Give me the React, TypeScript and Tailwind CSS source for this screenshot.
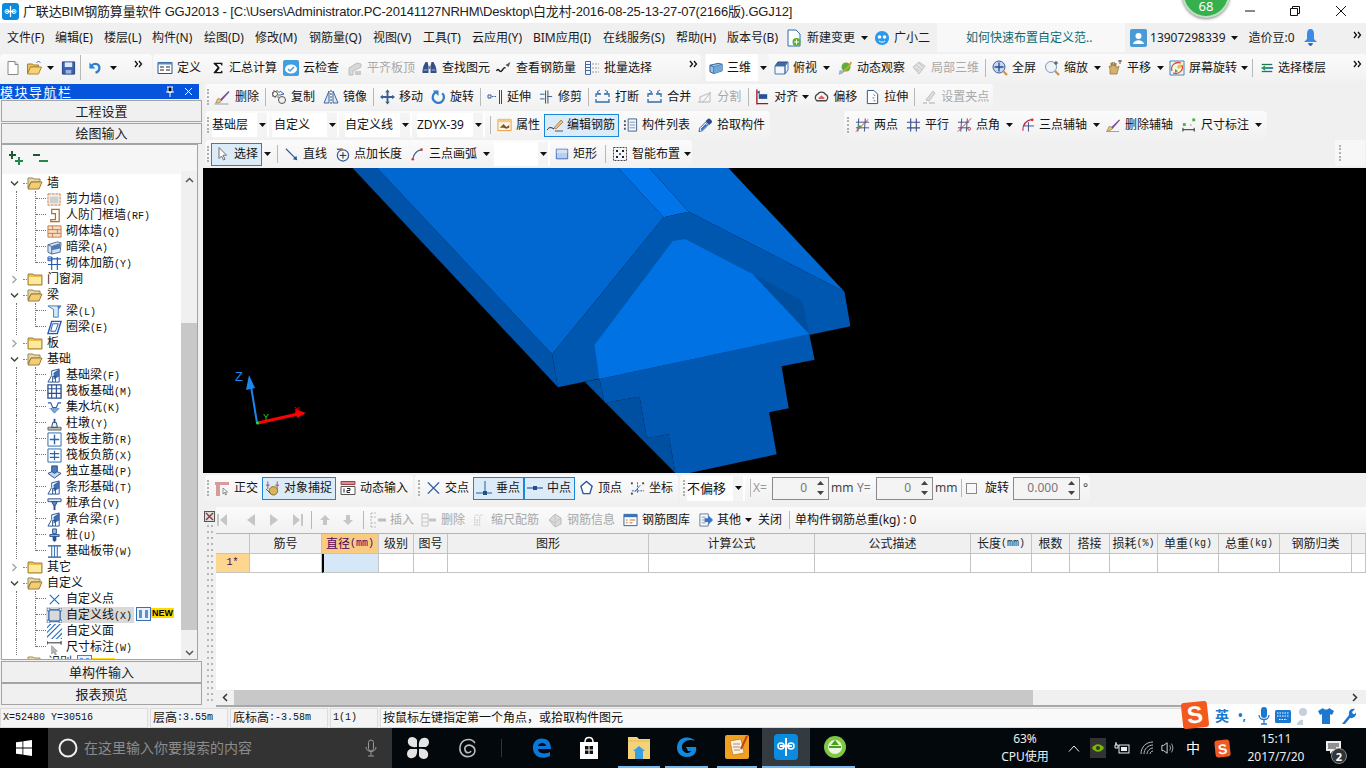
import React from 'react';

type N = React.ReactNode;
const Svg = ({ w = 16, h = 16, vb = '0 0 16 16', children }: { w?: number; h?: number; vb?: string; children: N }) => (
  <svg width={w} height={h} viewBox={vb} className="shrink-0 block" fill="none">{children}</svg>
);

const ic: Record<string, N> = {
  newf: <><path d="M3 1.500h7l3 3v10H3z" fill="#fff" stroke="#888" /><path d="M10 1.500v3h3" stroke="#888" fill="#e8e8e8" /></>,
  open: <><path d="M1 4h5l1 1h5v2H4L1 14z" fill="#e8c468" stroke="#a87f20" /><path d="M4 7h11l-3 7H1z" fill="#f6d27a" stroke="#b08a2a" /><path d="M10 3c1-2 3-2 4 0" stroke="#3a6fc0" /></>,
  save: <><path d="M1.500 1.500h13v13h-13z" fill="#3a62b4" stroke="#24407c" /><path d="M4 2h8v5H4z" fill="#dfe8f6" /><path d="M5 10h6v4H5z" fill="#9db4d8" /></>,
  undo: <><path d="M4 5c4-3 9-1 8 4-.4 2-2 3.500-4 4" stroke="#2f7fd0" strokeWidth="2.400" /><path d="M1.500 2v6.500H8z" fill="#2f7fd0" /></>,
  def: <><path d="M1 2.500h14v11H1z" fill="#fff" stroke="#27558f" /><path d="M1 2.500h14v2H1z" fill="#5d8bc4" /><path d="M3 7h4M3 10h4M9 7h4M9 10h4" stroke="#222" /></>,
  sigma: <path d="M3 2h10v3h-1l-1-1.500H6.500L10 8l-3.500 4.500H11l1-1.500h1v3H3v-1l4.500-5.500L3 3z" fill="#111" />,
  cloud: <><rect x="0" y="0" width="16" height="16" rx="2" fill="#3f9fe0" /><ellipse cx="8" cy="9" rx="6" ry="4.500" fill="#fff" /><path d="M5 9l2 2 4-4" stroke="#3f9fe0" strokeWidth="1.500" /></>,
  flat: <><path d="M2 8l8-5 4 1v3L6 11v4H2z" fill="#d8d8d8" stroke="#bdbdbd" /><path d="M8 11h6v4H8z" fill="#cacaca" /></>,
  binoc: <><path d="M2 6l2-4h2l1 4v7H1v-3zM14 6l-2-4h-2L9 6v7h6v-3z" fill="#354f86" /><path d="M7 6h2v3H7z" fill="#6b7fa8" /><path d="M2 10h4M10 10h4" stroke="#a9b8d4" /></>,
  view: <><path d="M1 11c2-4 3 2 5 0s2-4 4-3" stroke="#222" strokeWidth="1.500" /><path d="M10 5l5-3-2 5z" fill="#555" /></>,
  batch: <><path d="M1.500 1.500h5v13h-5z" stroke="#4668a4" /><path d="M1.500 4.500h5M1.500 7.500h5M1.500 10.500h5" stroke="#4668a4" /><path d="M8 4h7M8 8h7M8 12h7" stroke="#9a9a9a" strokeDasharray="2 1" /></>,
  cube: <><path d="M1 5l9-2 4 1v7l-9 3-4-2z" fill="#9cc4e6" stroke="#2c5f92" /><path d="M1 5l4 2 9-3M5 7v7" stroke="#2c5f92" /><path d="M5 7l9-3v7l-9 3z" fill="#6ea7d8" /></>,
  top: <><path d="M5 2h10l-3 4H2z" fill="#3e6da8" stroke="#2c4f80" /><path d="M2 6h10v8H2zM12 6l3-4v8l-3 4z" fill="#f0f6fc" stroke="#4c78aa" /></>,
  orbit: <><circle cx="9" cy="7" r="4.500" fill="#5fae3c" /><path d="M2 14C5 13 13 7 14 2" stroke="#c9a23a" strokeWidth="1.800" /><circle cx="4" cy="12" r="2" fill="#9ab6d8" /></>,
  local: <><path d="M2 7l6-5 6 4-6 8z" fill="#e2e2e2" stroke="#c4c4c4" /><path d="M5 5l6 5M8 3l4 4M3 8l5 3" stroke="#c4c4c4" /></>,
  full: <><circle cx="7" cy="7" r="6" fill="#c6d8f0" stroke="#3a5f9c" /><path d="M7 2.500v9M2.500 7h9" stroke="#244a8c" strokeWidth="1.300" /><path d="M11 11l4 4" stroke="#d89236" strokeWidth="2.200" /></>,
  zoom: <><circle cx="7" cy="7" r="5.500" fill="#eef3fa" stroke="#8097b8" /><path d="M11 11l4 4" stroke="#c09540" strokeWidth="2.200" /><path d="M12 1v4M10 3h4" stroke="#444" /></>,
  pan: <><path d="M3 14V9L2 6l2 1V3l1 3V2l2 4V2l1 4 1-3v5l3-2-2 8H3z" fill="#d8b070" stroke="#8e6b2e" strokeWidth=".7" /><path d="M11 1h4M13 0v4" stroke="#555" /></>,
  rot: <><path d="M1 1h14v14H1z" fill="#f3f7e8" stroke="#3e86c6" /><path d="M8 6l4-2 1 3-4 2z" fill="#e6c24a" /><path d="M6 9l3 2-3 2z" fill="#58a548" /><path d="M3 11C1 6 6 1 12 3M13 5c2 5-3 10-9 8" stroke="#e24a3a" strokeWidth="1.300" /></>,
  floor: <><path d="M2 4h12" stroke="#1f7a4c" strokeWidth="1.500" /><path d="M6 8h9" stroke="#2a6eb0" strokeWidth="2" /><path d="M2 12h12" stroke="#1f7a4c" strokeWidth="1.500" /><path d="M6 5v6L1 8z" fill="#1f9a58" /></>,
  brush: <><path d="M5 11L14 2l1 1-8 9z" fill="#7a4aa0" /><path d="M3 10c2-1 3 0 4 2-2 2-4 2-6 2 1-1 1-2 2-4z" fill="#e8c47a" stroke="#8a6a2a" strokeWidth=".6" /><path d="M0 15h14" stroke="#8aa0b8" /></>,
  copy: <><path d="M2 2h6v6H2z" fill="#fff" stroke="#666" strokeDasharray="2 1" /><circle cx="4" cy="5" r="2.500" stroke="#555" /><circle cx="11" cy="11" r="3.500" stroke="#555" fill="#f0f0f0" /><path d="M9 2l4 3-4 1" stroke="#3a66a8" /></>,
  mirror: <><path d="M1 14L6 2v12zM15 14L10 2v12z" fill="#dbe8f6" stroke="#3a66a8" /><path d="M8 1v14" stroke="#444" strokeDasharray="2 1" /></>,
  move: <path d="M8 0l2.500 3H9v4h4V5.500L16 8l-3 2.500V9H9v4h1.500L8 16l-2.500-3H7V9H3v1.500L0 8l3-2.500V7h4V3H5.500z" fill="#3b5e95" />,
  rotate: <><path d="M12 4a6 6 0 1 1-7-1" stroke="#2f7ec9" strokeWidth="2.400" /><path d="M2 1h6v6z" fill="#2f7ec9" /></>,
  extend: <><path d="M1 6h3v3H1z" stroke="#2f5f9e" /><path d="M5 7.500h5" stroke="#2f5f9e" strokeDasharray="1.500 1" /><path d="M12.500 1v14M14.500 1v14" stroke="#2a4f88" /></>,
  trim: <><path d="M1 5h5M1 10h5M9 7.500h5" stroke="#2f5f9e" /><path d="M7 1v14M9.500 1v14" stroke="#444" /></>,
  brk: <><path d="M1 8V5h5M9 5h5v3M1 10v3h13v-3" stroke="#2f6ea8" strokeWidth="1.300" /><path d="M5 1L2 3l3 2M10 1l3 2-3 2" stroke="#2f6ea8" /></>,
  merge: <><path d="M1 8V5h5M9 5h5v3M1 10v3h13v-3" stroke="#2f6ea8" strokeWidth="1.300" /><path d="M2 1l3 2-3 2M13 1l-3 2 3 2" stroke="#2f6ea8" /></>,
  split: <><path d="M1 13h12M3 13V8l10-4v9" stroke="#c8c8c8" strokeWidth="1.300" /><path d="M5 14L14 3" stroke="#bdbdbd" /></>,
  align: <><path d="M2 0v16M2 15h12" stroke="#a01818" strokeWidth="1.400" /><path d="M4 5h9v5H4z" fill="#284f98" /><path d="M2 3l3-2v4z" fill="#284f98" /></>,
  offset: <><path d="M3 12a4 4 0 0 1 1-7c1-3 7-3 8 0a4 4 0 0 1 1 7z" fill="#f4f4f4" stroke="#444" strokeWidth="1.400" /><path d="M5 10c-1-2 2-2 3-4 1 2 4 2 3 4z" fill="#e06060" /></>,
  stretch: <><path d="M2.500 1h7l4 4v10h-11z" fill="#fff" stroke="#224c88" /><path d="M9 5l2 2M8 9h2M9 12h2" stroke="#666" /></>,
  handle: <><path d="M2 14h4M8 14h6" stroke="#c4c4c4" strokeWidth="1.500" /><path d="M5 11l7-9 2 2-6 8z" fill="#dcdcdc" stroke="#c0c0c0" /></>,
  prop: <><path d="M1 2h14v12H1z" fill="#fff4e2" stroke="#e89a3c" /><path d="M1 2h14v3H1z" fill="#f6c884" /><path d="M3 11l4-4 3 3 3-2v3l-3 1-3-1z" fill="#6d5a34" /></>,
  edit: <><path d="M0 13c2-3 4-3 7-1" stroke="#222" /><path d="M7 11l7-8 2 2-7 7z" fill="#e8c088" stroke="#9a6b2c" strokeWidth=".7" /><path d="M8 14h8" stroke="#555" /></>,
  list: <><path d="M1 3h2v2H1zM1 7h2v2H1zM1 11h2v2H1z" fill="#556" /><path d="M5.500 1.500h9v13h-9z" fill="#f4f7fb" stroke="#3f5e8c" /><path d="M7 5h6M7 8h6M7 11h6" stroke="#7c90ae" /></>,
  pick: <><path d="M1 15l1-4 6-6 3 3-6 6z" fill="#fff" stroke="#2c5ca8" /><path d="M3 12l5-5 2 1-6 6z" fill="#2c6bc8" /><path d="M8 4l3-3c2 0 4 2 4 4l-3 3z" fill="#2a4c8c" /></>,
  two: <><path d="M4 1l-1 14M11 1l-1 14M1 5h14M1 11h14" stroke="#3a4f88" /><path d="M1 15L14 2" stroke="#d03030" /><circle cx="5" cy="10" r="1.700" fill="#57a030" /></>,
  para: <path d="M5 1v14M11 1v14M1 5h14M1 11h14" stroke="#3a4f88" strokeWidth="1.200" />,
  angle: <><path d="M5 1l-1 14M11 1l-1 14M1 5h12M1 11h12" stroke="#3a4f88" /><path d="M1 15L15 1" stroke="#d03030" /><circle cx="13" cy="12" r="1.500" stroke="#d03030" /></>,
  arc3: <><path d="M3 14C3 6 7 3 13 2" stroke="#c83040" strokeWidth="1.300" /><circle cx="13" cy="2.500" r="1.500" fill="#c83040" /><path d="M9 5v10M4 9h11" stroke="#3a4f88" /></>,
  dim: <><path d="M1 11v4M13 11v4M1 13h12" stroke="#222" /><rect x="1" y="6" width="3" height="3" fill="#48b048" /><rect x="11" y="1" width="3" height="3" fill="#48b048" /><path d="M9 8h1" stroke="#333" /></>,
  sel: <path d="M5 1.500v11l2.500-2.500 2 4 1.500-.8-2-4h3.500z" fill="#fff" stroke="#707070" />,
  line: <><path d="M1 2l11 11" stroke="#2a5a96" strokeWidth="1.300" /><path d="M14 15l-5-1 4-4z" fill="#2a5a96" /></>,
  lenp: <><circle cx="8.500" cy="9.500" r="6" stroke="#2f5c96" strokeWidth="1.300" /><path d="M8.500 6v7M5 9.500h7" stroke="#222" /><path d="M2 3h5" stroke="#2f5c96" strokeWidth="1.500" /><circle cx="7" cy="3" r="1.500" fill="#d26a2a" /></>,
  arc: <><path d="M2 14C3 8 7 4 12 3" stroke="#2f5c96" strokeWidth="1.400" /><circle cx="2" cy="14" r="1.500" fill="#d03a3a" /><circle cx="12" cy="3" r="1.500" fill="#d03a3a" /></>,
  rect: <><path d="M1.500 2.500h13v11h-13z" fill="#b8cef0" stroke="#3464b8" /><path d="M2 3h12v4H2z" fill="#d4e2f8" /></>,
  smart: <><path d="M1.500 1.500h13v13h-13z" fill="#f6f6f6" stroke="#444" strokeDasharray="2 1" /><path d="M4 4h2v2H4zM10 4h2v2h-2zM4 10h2v2H4zM10 10h2v2h-2z" fill="#222" /><path d="M7 7h2v2H7z" fill="#2f6ec8" /></>,
  ortho: <><path d="M1 2h14v3H6v11H2V5H1z" fill="#d89b9b" /><path d="M9 8l0 6 1.500-1.500 1 2.500 1-.5-1-2.500 2 0z" fill="#fff" stroke="#666" strokeWidth=".7" /></>,
  snap: <><path d="M3 1v8M13 1v8M1 5h4M11 5h4" stroke="#b84848" /><circle cx="9" cy="11" r="4.500" fill="#d8b45a" stroke="#8a6b26" /><path d="M1 9l5 5" stroke="#6a4a18" /></>,
  dyn: <><path d="M1 1.500h14v3H1z" fill="#d89090" stroke="#a04040" /><path d="M1 6.500h14v8H1z" fill="#fff" stroke="#555" /><path d="M4 8.500v4M7 8.500h3v2H7v2h3" stroke="#222" /></>,
  cross: <path d="M2 2l12 12M14 2L2 14" stroke="#2a5a9c" strokeWidth="1.500" />,
  perp: <><path d="M0 13h16" stroke="#2a5a9c" /><path d="M9 1v12" stroke="#2a5a9c" /><rect x="7" y="11" width="4" height="4" fill="#20508c" /></>,
  mid: <><path d="M0 8h16" stroke="#2a5a9c" strokeWidth="1.200" /><rect x="6" y="6" width="4" height="4" fill="#20508c" /></>,
  vert: <path d="M8 1l6 5-2.500 8h-7L2 6z" fill="#fff" stroke="#2a5a9c" strokeWidth="1.500" />,
  coord: <><path d="M8 2v12M2 11h13" stroke="#2a5a9c" strokeDasharray="2 1" /><rect x="1" y="2" width="2" height="2" fill="#444" /><rect x="13" y="2" width="2" height="2" fill="#444" /><rect x="1" y="13" width="2" height="2" fill="#444" /><path d="M5 12l6-7" stroke="#2a7ac9" /></>,
  ins: <><path d="M2 1h5M2 1v14M2 15h5M2 5h5M2 11h5" stroke="#bdbdbd" strokeDasharray="2 1" /><path d="M9 8h8" stroke="#bdbdbd" strokeWidth="3" /></>,
  del: <><path d="M1 2h6v12H1zM1 6h6M1 10h6" stroke="#c4c4c4" /><path d="M8 8h7" stroke="#c4c4c4" strokeWidth="3" /></>,
  scale: <><path d="M1 15V4M4 15V7M7 15V4" stroke="#c0c0c0" strokeWidth="1.200" strokeDasharray="2 1" /><path d="M1 2h10" stroke="#c0c0c0" strokeDasharray="2 1" /></>,
  info: <><path d="M2 8l6-6 6 4v6l-6 3z" fill="#dadada" stroke="#bcbcbc" /><path d="M8 2v13M2 8l6 3 6-5" stroke="#c4c4c4" /></>,
  lib: <><path d="M1 2h14v12H1z" fill="#fff" stroke="#2d5f98" /><path d="M1 2h14v3H1z" fill="#3a74b8" /><path d="M3 8h2M7 8h6M3 11h2M7 11h3" stroke="#c86030" /></>,
  other: <><path d="M2 1.500h9v13H2z" fill="#f4f6fa" stroke="#6b7d98" /><path d="M4 5h4M4 8h3M4 11h4" stroke="#8a98b0" /><path d="M7 6h4V3l5 5-5 5v-3H7z" fill="#3a74c8" /></>,
};

const I = ({ n, w = 16 }: { n: string; w?: number }) => <Svg w={w}>{ic[n]}</Svg>;

const Arr = ({ c = '#111' }: { c?: string }) => (
  <svg width="7" height="4" viewBox="0 0 7 4" className="shrink-0 block"><path d="M0 0h7L3.500 4z" fill={c} /></svg>
);
const Drop = ({ n, cls = '' }: { n?: boolean; cls?: string }) => (
  <div className={`flex items-center justify-center shrink-0 h-full ${n ? 'w-[6px]' : 'w-[10px]'} ${cls}`}><Arr /></div>
);
const Sep = ({ cls = '' }: { cls?: string }) => (
  <div className={`w-[5px] shrink-0 h-full flex items-center justify-center ${cls}`}><div className="w-px h-[18px] bg-[#b8b8b8]" /></div>
);
const Grip = ({ cls = 'w-[5px]' }: { cls?: string }) => (
  <div className={`shrink-0 flex justify-center ${cls}`}><div className="h-[16px] border-l-2 border-dotted border-[#b0b0b0]" /></div>
);
const Tool = ({ i, t, g, w = 16, cls = '' }: { i: string; t: string; g?: boolean; w?: number; cls?: string }) => (
  <div className={`flex items-center gap-1 px-1 h-full shrink-0 ${g ? 'text-[#a8a8a8]' : 'text-[#141414]'} ${cls}`}>
    <I n={i} w={w} />
    <span className="whitespace-nowrap">{t}</span>
  </div>
);
const Act = ({ i, t, w = 16 }: { i: string; t: string; w?: number }) => (
  <div className="flex items-center gap-1 pl-[2px] pr-[3px] shrink-0 h-[23px] border border-[#1a86d8] bg-[#dcebf8] text-[#141414]">
    <I n={i} w={w} />
    <span className="whitespace-nowrap">{t}</span>
  </div>
);
const More = ({ cls = '' }: { cls?: string }) => (
  <svg width="10" height="8" viewBox="0 0 10 8" className={`shrink-0 block ${cls}`}><path d="M1 1l2.500 3L1 7M5 1l2.500 3L5 7" stroke="#111" strokeWidth="1.300" fill="none" /></svg>
);
const Sel = ({ t, cls, txt = '' }: { t?: string; cls: string; txt?: string }) => (
  <div className={`flex items-center justify-between h-[24px] shrink-0 bg-white pr-[2px] ${cls}`}>
    <span className={`whitespace-nowrap ${txt}`}>{t}</span>
    <div className="w-[10px] h-full flex items-center justify-center bg-[#f4f4f4]"><Arr /></div>
  </div>
);
const Seg = ({ cls = '', children }: { cls?: string; children: N }) => (
  <div className={`flex items-center shrink-0 rounded-sm bg-gradient-to-b from-[#fbfbfb] to-[#f1f1f1] ${cls}`}>{children}</div>
);

const M = ({ s }: { s: string }) => (
  <>
    {s.split(/([\x20-\x7e]+)/).map((p, i) =>
      /^[\x20-\x7e]+$/.test(p)
        ? <span key={i} className="font-['Liberation_Mono',monospace] text-[10px] whitespace-pre">{p}</span>
        : <span key={i}>{p}</span>
    )}
  </>
);

const Win = ({ children, cls = '' }: { children: N; cls?: string }) => (
  <div className={`h-[22px] mx-px border border-[#a4a4a4] bg-[#f0f0f0] flex items-center justify-center text-[13px] text-[#222] shrink-0 ${cls}`}>{children}</div>
);

const treeIcons: Record<string, N> = {
  shear: <><path d="M1 2h13v12H1z" fill="#eee" stroke="#d0773a" strokeDasharray="3 1" /><path d="M3 5h9v7H3z" fill="#bbb" opacity=".6" /></>,
  door: <path d="M5 1.500h8v13H4v-2h5V6H5z" fill="#fff" stroke="#b86a26" strokeWidth="1.300" />,
  brick: <><path d="M1 2h14v12H1z" fill="#f6dcc4" stroke="#c87a44" /><path d="M1 6h14M1 10h14M6 2v4M11 6v4M6 10v4" stroke="#c87a44" /></>,
  dark: <><path d="M1 5l10-3 4 1-1 10-9 2-4-2z" fill="#d6e2f0" stroke="#486c98" /><path d="M5 7v8M1 5l4 2 9-3" stroke="#486c98" /><path d="M5 7l9-3v5l-9 2z" fill="#4f7cb0" /></>,
  wr: <><path d="M1 3h14M1 9h14M5 1v14M11 1v14" stroke="#2458b0" strokeWidth="1.200" /><path d="M1 1h4v4H1z" fill="none" stroke="#2458b0" /></>,
  beam: <><path d="M1 2h14l-3 4v8H7V6z" fill="#dbe8f6" stroke="#3c7cc0" /><path d="M11 2l3 0-2 4z" fill="#3c7cc0" /></>,
  ring: <><path d="M5 1.500h10l-4 13H1z" fill="#eef4fc" stroke="#2458b0" strokeWidth="1.500" /><path d="M6 4h6l-3 8H4z" fill="#fff" stroke="#2458b0" /></>,
  fb: <><path d="M1 15l4-7V3l8-2v14H1z" fill="#fff" stroke="#284f90" /><path d="M7 5l6-4v8l-6 3z" fill="#3b6db0" /><path d="M6 15V9h3v6" stroke="#284f90" /></>,
  raft: <><path d="M1 1h14v14H1z" fill="#fff" stroke="#284f90" strokeWidth="1.400" /><path d="M5 1v14M10 1v14M1 5h14M1 10h14" stroke="#284f90" strokeWidth="1.200" /></>,
  pit: <><path d="M1 3h3l2 5h4l2-5h3" stroke="#2a5ea8" strokeWidth="1.200" /><path d="M3 9l5 5 5-5z" fill="#7aa6d8" strokeDasharray="1 1" stroke="#2a5ea8" /></>,
  pier: <><path d="M1 12h14v3H1z" fill="#b8b8b8" stroke="#666" /><path d="M5 12l1-5h4l1 5z" fill="#eef" stroke="#245" /><path d="M7 7V3h2v4z" fill="#2458b0" /></>,
  main: <><path d="M1 1h14v14H1z" fill="#fff" stroke="#2a64b0" /><path d="M8 3v10M3 8h10" stroke="#2a64b0" strokeWidth="1.500" /></>,
  neg: <><path d="M1 1h14v14H1z" fill="#fff" stroke="#2a64b0" /><path d="M8 3v10M3 6h10M3 10h10" stroke="#2a64b0" strokeWidth="1.300" /></>,
  ind: <><path d="M1 10l7-3 7 3-7 5z" fill="#c8d8ec" stroke="#284f90" /><path d="M5 8V2h6v6l-3 2z" fill="#4a7ab8" stroke="#284f90" /></>,
  pc: <><path d="M1 3h14v3H1z" fill="#dce8f6" stroke="#284f90" /><path d="M5 6h6l-2 4H7z" fill="#5a8ac0" stroke="#284f90" /><path d="M7 10h2v5H7z" fill="#284f90" /></>,
  pile: <><path d="M6 1h4v5H6zM3 7h10v2H3z" fill="#9bbbe0" stroke="#284f90" /><path d="M6 9h4v4l-2 2-2-2z" fill="#284f90" /></>,
  band: <><path d="M1 2h14M1 14h14" stroke="#284f90" strokeWidth="1.500" /><path d="M5 2v12M11 2v12M8 2v12" stroke="#3d78c0" strokeWidth="1.200" /></>,
  cp: <path d="M3 3l10 10M13 3L3 13" stroke="#2a6ec0" strokeWidth="1.300" />,
  cl: <><path d="M2 2h12v12H2z" stroke="#1f58a8" strokeWidth="1.200" /><path d="M0 0h3v3H0zM13 0h3v3h-3zM0 13h3v3H0zM13 13h3v3h-3z" fill="#fff" stroke="#1f58a8" strokeWidth=".8" /></>,
  cf: <path d="M-1 5L5 -1M-1 10L10 -1M-1 15L15 -1M4 17L17 4M9 17L17 9M14 17L17 14" stroke="#2a6ec0" strokeWidth="1.200" />,
  dm: <><path d="M0 1v4M15 1v4M0 3h15" stroke="#222" /><path d="M5 6v9l2-2 2 3 1-1-2-3h3z" fill="#bbb" stroke="#888" strokeWidth=".7" /></>,
};

type R = { l: 0 | 1; t: string; i?: string; open?: boolean; last?: boolean; sel?: boolean };
const tree: R[] = [
  { l: 0, t: '墙', open: true },
  { l: 1, t: '剪力墙(Q)', i: 'shear' }, { l: 1, t: '人防门框墙(RF)', i: 'door' }, { l: 1, t: '砌体墙(Q)', i: 'brick' }, { l: 1, t: '暗梁(A)', i: 'dark' }, { l: 1, t: '砌体加筋(Y)', i: 'wr', last: true },
  { l: 0, t: '门窗洞' },
  { l: 0, t: '梁', open: true },
  { l: 1, t: '梁(L)', i: 'beam' }, { l: 1, t: '圈梁(E)', i: 'ring', last: true },
  { l: 0, t: '板' },
  { l: 0, t: '基础', open: true },
  { l: 1, t: '基础梁(F)', i: 'fb' }, { l: 1, t: '筏板基础(M)', i: 'raft' }, { l: 1, t: '集水坑(K)', i: 'pit' }, { l: 1, t: '柱墩(Y)', i: 'pier' }, { l: 1, t: '筏板主筋(R)', i: 'main' }, { l: 1, t: '筏板负筋(X)', i: 'neg' }, { l: 1, t: '独立基础(P)', i: 'ind' }, { l: 1, t: '条形基础(T)', i: 'fb' }, { l: 1, t: '桩承台(V)', i: 'pc' }, { l: 1, t: '承台梁(F)', i: 'fb' }, { l: 1, t: '桩(U)', i: 'pile' }, { l: 1, t: '基础板带(W)', i: 'band', last: true },
  { l: 0, t: '其它' },
  { l: 0, t: '自定义', open: true },
  { l: 1, t: '自定义点', i: 'cp' }, { l: 1, t: '自定义线(X)', i: 'cl', sel: true }, { l: 1, t: '自定义面', i: 'cf' }, { l: 1, t: '尺寸标注(W)', i: 'dm', last: true },
];

const Folder = ({ open }: { open?: boolean }) => (
  <svg width="16" height="14" viewBox="0 0 16 14" className="shrink-0 block">
    {open ? <><path d="M1 2h5l1 1h6v3H4L1 12z" fill="#e8d8a8" stroke="#9a8450" /><path d="M4 6h11l-3 7H1z" fill="#f4cd72" stroke="#9a7c3c" /></>
      : <><path d="M1 2h5l1 1h8v10H1z" fill="#f0c040" stroke="#9a8450" /><path d="M2 5h12v7H2z" fill="#ffe8a0" /></>}
  </svg>
);
const NewMark = () => (
  <span className="bg-[#ffd800] text-black text-[9px] leading-[9px] font-bold font-['Liberation_Sans',sans-serif] px-px">NEW</span>
);
const Columns = () => (
  <svg width="15" height="14" viewBox="0 0 15 14" className="shrink-0 block"><rect x=".5" y=".5" width="14" height="13" fill="#eaf2fb" stroke="#3a70b8" /><path d="M3 3h3v8H3zM9 3h3v8H9z" fill="#5a90d0" /></svg>
);

const TreeRow = ({ r }: { r: R }) => {
  if (r.l === 0) {
    return (
      <div className="flex items-center h-4 shrink-0">
        <div className="w-[22px] flex justify-center shrink-0 pl-[5px]">
          <svg width="9" height="9" viewBox="0 0 9 9" className="block">
            {r.open ? <path d="M1 2.500l3.500 3.500L8 2.500" stroke="#444" strokeWidth="1.500" fill="none" /> : <path d="M2.500 1L6 4.500 2.500 8" stroke="#a8a8a8" strokeWidth="1.500" fill="none" />}
          </svg>
        </div>
        <div className="w-[4px] border-b border-dotted border-[#888] shrink-0" />
        <Folder open={r.open} />
        <span className="ml-[4px] whitespace-nowrap">{r.t}</span>
      </div>
    );
  }
  return (
    <div className="flex items-center h-4 shrink-0">
      <div className="w-[15px] shrink-0" />
      <div className="w-[19px] h-full border-l border-dotted border-[#777] shrink-0" />
      <div className={`w-[11px] shrink-0 self-start border-l border-dotted border-[#777] ${r.last ? 'h-[8px]' : 'h-full'} flex flex-col`}>
        <div className="h-[8px] border-b border-dotted border-[#777]" />
      </div>
      <div className={`flex items-center h-full ${r.sel ? 'bg-[#d9d9d9] pr-[2px]' : ''}`}>
        <div className="w-[16px] pl-px shrink-0"><Svg w={15} h={15}>{treeIcons[r.i!]}</Svg></div>
        <span className="ml-[4px] whitespace-nowrap"><M s={r.t} /></span>
      </div>
      {r.sel && <div className="ml-[2px] flex items-start h-full"><Columns /><div className="mt-[-1px]"><NewMark /></div></div>}
    </div>
  );
};

const Nav = () => (
  <div className="w-[203px] shrink-0 h-full flex flex-col">
    <div className="h-[15px] w-[199px] bg-[#0654dc] flex items-center text-white text-[13px] tracking-[1.5px] leading-none shrink-0">
      <span className="font-['Noto_Sans_CJK_SC',sans-serif]">模块导航栏</span>
      <svg width="10" height="11" viewBox="0 0 10 11" className="ml-auto block"><path d="M2 1h6M3 1v5h4V1M1 6h8M5 6v5" stroke="#fff" /></svg>
      <svg width="9" height="9" viewBox="0 0 9 9" className="ml-[9px] mr-[6px] block"><path d="M1 1l7 7M8 1L1 8" stroke="#fff" /></svg>
    </div>
    <Win cls="mt-[1px]">工程设置</Win>
    <Win cls="mt-[1px] !h-[21px]">绘图输入</Win>
    <div className="w-[197px] ml-px h-[516px] border border-[#a4a4a4] bg-white flex flex-col shrink-0 text-[#111]">
      <div className="h-[29px] bg-[#f6f6f6] flex items-start pt-[5px] pl-[6px] gap-[7px] shrink-0">
        <svg width="17" height="16" viewBox="0 0 17 16" className="block"><path d="M4 1v8M1 5h7" stroke="#1c5c2c" strokeWidth="2" /><path d="M11 7v8M7 11h8" stroke="#1f8a4a" strokeWidth="2" /></svg>
        <svg width="17" height="16" viewBox="0 0 17 16" className="block"><path d="M1 5h7" stroke="#1c5c2c" strokeWidth="2" /><path d="M7 11h9" stroke="#1f8a4a" strokeWidth="2" /></svg>
      </div>
      <div className="flex flex-1 min-h-0">
        <div className="flex-1 min-w-0 overflow-hidden flex flex-col pt-[1px] -ml-px">
          {tree.map((r) => <TreeRow key={r.t} r={r} />)}
          <div className="flex items-center h-4 shrink-0 -mt-[1px] opacity-90">
            <div className="w-[26px] shrink-0" />
            <Folder open />
            <span className="ml-[5px] whitespace-nowrap mr-[5px]">识别</span>
            <Columns />
            <NewMark />
          </div>
        </div>
        <div className="w-[16px] shrink-0 -mt-[3px] bg-[#f0f0f0] flex flex-col">
          <div className="h-[18px] flex items-center justify-center"><svg width="9" height="6" viewBox="0 0 9 6" className="block"><path d="M1 5l3.500-3.500L8 5" stroke="#555" strokeWidth="1.500" fill="none" /></svg></div>
          <div className="h-[134px]" />
          <div className="h-[307px] bg-[#c8c8c8]" />
          <div className="flex-1 flex items-end justify-center pb-[3px]"><svg width="9" height="6" viewBox="0 0 9 6" className="block"><path d="M1 1l3.500 3.500L8 1" stroke="#555" strokeWidth="1.500" fill="none" /></svg></div>
        </div>
      </div>
    </div>
    <Win cls="mt-[1px]">单构件输入</Win>
    <Win cls="mt-[0px]">报表预览</Win>
  </div>
);

const Scene = () => (
  <svg width="1163" height="305" className="block">
    <g transform="scale(0.44643 0.33333) translate(0 -9)">
      <path d="M335 9H390L782 568 795 667z" fill="#0053a8" />
      <path d="M390 9H930L1032 157 782 568z" fill="#0068d0" />
      <path d="M930 9H1000L1088 140 1032 157z" fill="#0074e8" />
      <path d="M1000 9H1177L1437 380 1088 140z" fill="#0068d0" />
      <path d="M782 568L1032 157 1088 140 1437 380 1450 484 795 667z" fill="#0057b0" />
      <path d="M855 650L888 642 900 713 978 695 994 820 1043 808 1058 924z" fill="#0050a2" />
      <path d="M888 642L1358 507 1370 584 1296 604 1312 730 1268 742 1285 868 1090 924H1058L1043 808 994 820 978 695 900 713z" fill="#0058b2" />
      <path d="M877 540L1052 228 1080 222 1232 328 1358 507 888 642z" fill="#0072e4" />
      <path d="M1232 328L1342 406 1358 507z" fill="#004f9e" />
    </g>
    <path d="M54 255L47 212" stroke="#1a88f0" strokeWidth="2" />
    <path d="M46 207L43 222 52 220z" fill="#1a88f0" />
    <path d="M55 255L95 246" stroke="#ff0000" strokeWidth="3" />
    <path d="M103 245L92 241 94 250z" fill="#ff0000" />
    <circle cx="54.500" cy="255" r="1.500" fill="#20e020" />
    <text x="32" y="213" fontSize="13" fill="#1a88f0" fontFamily="Liberation Sans">Z</text>
    <text x="60" y="252" fontSize="9" fill="#20d020" fontFamily="Liberation Sans">Y</text>
    <text x="91" y="245" fontSize="9" fill="#e00000" fontFamily="Liberation Sans">X</text>
  </svg>
);

const Spin = ({ v, cls }: { v: string; cls: string }) => (
  <div className={`h-[23px] border border-[#8a8a8a] bg-[#f4f4f4] flex items-center justify-end shrink-0 text-[#777] ${cls}`}>
    <span>{v}</span>
    <div className="w-[16px] flex flex-col items-center gap-[6px] ml-[5px]">
      <svg width="7" height="4" viewBox="0 0 7 4" className="block"><path d="M0 4h7L3.500 0z" fill="#444" /></svg>
      <svg width="7" height="4" viewBox="0 0 7 4" className="block"><path d="M0 0h7L3.500 4z" fill="#444" /></svg>
    </div>
  </div>
);

const Pg = ({ d, cls = '' }: { d: string; cls?: string }) => (
  <div className={`shrink-0 ${cls}`}><Svg w={12} h={14} vb="0 0 12 14"><path d={d} fill="#c6c6c6" /></Svg></div>
);

const cols = [
  ['', 'w-[34px]'], ['筋号', 'w-[72px]'], ['直径(mm)', 'w-[57px]'], ['级别', 'w-[35px]'], ['图号', 'w-[34px]'], ['图形', 'w-[201px]'],
  ['计算公式', 'w-[166px]'], ['公式描述', 'w-[156px]'], ['长度(mm)', 'w-[61px]'], ['根数', 'w-[38px]'], ['搭接', 'w-[40px]'], ['损耗(%)', 'w-[48px]'],
  ['单重(kg)', 'w-[61px]'], ['总重(kg)', 'w-[61px]'], ['钢筋归类', 'w-[72px]'], ['', 'flex-1'],
];

const Grid = () => (
  <div className="flex-1 min-h-0 bg-white flex flex-col border-t border-[#b4b4b4]">
    <div className="flex h-[20px] shrink-0">
      {cols.map(([t, w], i) => (
        <div key={i} className={`${w} shrink-0 h-full pt-px border-r border-b border-[#c4c4c4] flex items-center justify-center whitespace-nowrap ${i === 2 ? 'bg-[#f8cc80] text-[#50005a]' : 'bg-[#f0f0f0] text-[#222]'}`}><M s={t} /></div>
      ))}
    </div>
    <div className="flex h-[19px] shrink-0">
      {cols.map(([, w], i) => (
        <div key={i} className={`${w} shrink-0 h-full border-r border-b border-[#c4c4c4] flex items-center justify-center ${i === 0 ? 'bg-[#fdd78f] text-[#50005a]' : i === 2 ? 'bg-[#d6e7f7] border-l-2 border-l-black' : 'bg-white'}`}>{i === 0 ? <M s="1*" /> : null}</div>
      ))}
    </div>
  </div>
);

const Bottom = () => (
  <div className="flex flex-1 min-h-0">
    <div className="w-[13px] shrink-0 flex flex-col items-center pt-[4px]">
      <svg width="11" height="11" viewBox="0 0 11 11" className="block shrink-0"><rect x=".5" y=".5" width="10" height="10" fill="#ddd" stroke="#555" /><path d="M2 2l7 7M9 2L2 9" stroke="#803838" strokeWidth="1.300" /></svg>
      <div className="w-[8px] flex-1 mt-[1px] mb-[2px] bg-[radial-gradient(circle,#b8b8b8_1px,transparent_1.2px)] bg-[length:4px_6px]" />
    </div>
    <div className="flex-1 min-w-0 flex flex-col">
      <div className="h-[26px] shrink-0 flex items-center bg-gradient-to-b from-[#fbfbfb] to-[#f1f1f1]">
        <Pg d="M1 1h2v12H1zM11 1v12L4 7z" />
        <Pg cls="ml-[17px]" d="M10 1v12L2 7z" />
        <Pg cls="ml-[11px]" d="M2 1v12l8-6z" />
        <Pg cls="ml-[12px]" d="M1 1v12l7-6zM9 1h2v12H9z" />
        <Sep cls="ml-[5px]" />
        <Pg cls="ml-[5px]" d="M6 2l5 5H8v5H4V7H1z" />
        <Pg cls="ml-[11px]" d="M6 12L1 7h3V2h4v5h3z" />
        <Sep cls="ml-[7px]" />
        <Tool i="ins" t="插入" g w={18} cls="-ml-[2px]" />
        <Tool i="del" t="删除" g cls="-ml-[1px]" />
        <Tool i="scale" t="缩尺配筋" g w={13} cls="ml-[1px]" />
        <Tool i="info" t="钢筋信息" g />
        <Tool i="lib" t="钢筋图库" w={15} />
        <Tool i="other" t="其他" w={15} />
        <Drop n />
        <span className="ml-[7px] text-[#141414]">关闭</span>
        <Sep cls="ml-[5px]" />
        <span className="ml-[3px] text-[#141414] whitespace-nowrap">单构件钢筋总重(kg) : 0</span>
      </div>
      <Grid />
      <div className="h-[15px] shrink-0 bg-[#f0f0f0] flex items-center">
        <div className="w-[18px] flex justify-center shrink-0"><svg width="6" height="9" viewBox="0 0 6 9" className="block"><path d="M5 1L1.500 4.500 5 8" stroke="#333" strokeWidth="1.500" fill="none" /></svg></div>
        <div className="w-[799px] h-full bg-[#c8c8c8] shrink-0" />
        <div className="ml-auto w-[22px] flex justify-center"><svg width="6" height="9" viewBox="0 0 6 9" className="block"><path d="M1 1l3.500 3.500L1 8" stroke="#333" strokeWidth="1.500" fill="none" /></svg></div>
      </div>
      <div className="h-[2px] shrink-0 bg-[#a8a8a8]" />
    </div>
  </div>
);

const Right = () => (
  <div className="flex-1 min-w-0 h-full flex flex-col">
    <div className="h-[27px] shrink-0 flex items-start pl-[2px]">
      <Seg cls="h-[25px] w-[788px]">
        <Grip />
        <Tool i="brush" t="删除" w={17} /><Sep />
        <Tool i="copy" t="复制" cls="-ml-px" />
        <Tool i="mirror" t="镜像" /><Sep />
        <Tool i="move" t="移动" w={15} />
        <Tool i="rotate" t="旋转" w={15} /><Sep />
        <Tool i="extend" t="延伸" />
        <Tool i="trim" t="修剪" w={15} /><Sep />
        <Tool i="brk" t="打断" />
        <Tool i="merge" t="合并" />
        <Tool i="split" t="分割" g cls="-ml-[2px]" /><Sep cls="ml-px" />
        <Tool i="align" t="对齐" w={15} /><Drop n />
        <Tool i="offset" t="偏移" w={15} cls="ml-[2px]" />
        <Tool i="stretch" t="拉伸" w={15} /><Sep />
        <Tool i="handle" t="设置夹点" g />
      </Seg>
    </div>
    <div className="h-[29px] shrink-0 flex items-start pl-[2px]">
      <Seg cls="h-[28px] w-[565px]">
        <Grip />
        <Sel t="基础层" cls="w-[57px] ml-[2px]" />
        <Sel t="自定义" cls="w-[67px] ml-[3px] pl-[2px]" />
        <Sel t="自定义线" cls="w-[67px] ml-[6px]" />
        <Sel t="ZDYX-39" cls="w-[68px] ml-[5px]" />
        <Sep cls="ml-[3px]" />
        <Tool i="prop" t="属性" w={15} />
        <Act i="edit" t="编辑钢筋" />
        <Tool i="list" t="构件列表" w={15} />
        <Tool i="pick" t="拾取构件" w={15} />
      </Seg>
      <Seg cls="h-[28px] w-[423px] ml-[74px]">
        <Grip cls="w-[7px]" />
        <Tool i="two" t="两点" w={15} />
        <Tool i="para" t="平行" w={15} />
        <Tool i="angle" t="点角" w={15} /><Drop />
        <Tool i="arc3" t="三点辅轴" w={15} cls="ml-[2px]" /><Drop />
        <Tool i="brush" t="删除辅轴" w={15} cls="ml-px" />
        <Tool i="dim" t="尺寸标注" w={15} cls="ml-px" /><Drop />
      </Seg>
    </div>
    <div className="h-[28px] shrink-0 flex items-start pl-[2px]">
      <Seg cls="h-[28px] w-[487px]">
        <Grip />
        <div className="ml-px"><Act i="sel" t="选择" /></div>
        <Drop />
        <Sep cls="ml-[3px]" />
        <Tool i="line" t="直线" w={14} cls="ml-px" />
        <Tool i="lenp" t="点加长度" w={15} />
        <Tool i="arc" t="三点画弧" w={14} cls="ml-px" /><Drop />
        <Sel cls="w-[56px] ml-[3px]" />
        <Tool i="rect" t="矩形" w={14} cls="ml-px" />
        <Sep cls="ml-[2px]" />
        <Tool i="smart" t="智能布置" /><Drop n />
      </Seg>
      <div className="ml-auto mr-px w-[30px] h-[26px] bg-[#f7f7f7] flex items-center pl-[4px]">
        <div className="h-[16px] border-l-2 border-dotted border-[#b0b0b0]" />
      </div>
    </div>
    <div className="h-[305px] shrink-0 bg-black overflow-hidden"><Scene /></div>
    <div className="h-[30px] shrink-0 flex items-center pl-[2px] gap-[2px]">
      <Seg cls="h-[27px] w-[208px]">
        <Grip />
        <Tool i="ortho" t="正交" />
        <Act i="snap" t="对象捕捉" w={15} />
        <Tool i="dyn" t="动态输入" />
      </Seg>
      <Seg cls="h-[27px] w-[263px]">
        <Grip cls="w-[7px]" />
        <Tool i="cross" t="交点" w={15} />
        <Act i="perp" t="垂点" />
        <Act i="mid" t="中点" />
        <Tool i="vert" t="顶点" w={15} />
        <Tool i="coord" t="坐标" w={15} />
      </Seg>
      <Seg cls="h-[27px] w-[410px]">
        <Grip cls="w-[7px]" />
        <Sel t="不偏移" cls="w-[58px] !h-[25px] text-[13px]" />
        <Sep cls="ml-[3px]" />
        <span className="text-[#9a9a9a] w-[19px] shrink-0">X=</span>
        <Spin v="0" cls="w-[57px]" />
        <span className="ml-[2px] text-[#444] w-[26px] shrink-0">mm</span>
        <span className="text-[#777] w-[19px] shrink-0">Y=</span>
        <Spin v="0" cls="w-[57px]" />
        <span className="ml-[2px] text-[#444] w-[24px] shrink-0">mm</span>
        <Sep />
        <div className="ml-[2px] w-[11px] h-[11px] border border-[#8a8a8a] bg-[#f8f8f8] shrink-0" />
        <span className="ml-[8px] text-[#141414] shrink-0">旋转</span>
        <Spin v="0.000" cls="w-[67px] ml-[4px]" />
        <span className="ml-[3px] text-[#444]">°</span>
      </Seg>
    </div>
    <div className="h-[4px] shrink-0" />
    <Bottom />
  </div>
);

const Cell = ({ t, cls }: { t: string; cls: string }) => (
  <div className={`h-[20px] border border-[#dcdcdc] flex items-center shrink-0 pl-[2px] whitespace-nowrap text-[#111] ${cls}`}><M s={t} /></div>
);

const Tb = ({ children, cls = '' }: { children: N; cls?: string }) => (
  <div className={`h-full shrink-0 flex items-center justify-center ${cls}`}>{children}</div>
);

const Taskbar = () => (
  <div className="h-[40px] shrink-0 bg-[#03080c] flex items-stretch text-white">
    <Tb cls="w-[48px] bg-black">
      <svg width="16" height="16" viewBox="0 0 16 16" className="block"><path d="M0 2.300l6.500-.9v6.200H0zM7.300 1.300L16 0v7.600H7.300zM0 8.400h6.500v6.200L0 13.700zM7.300 8.400H16V16l-8.700-1.200z" fill="#fff" /></svg>
    </Tb>
    <div className="w-[344px] bg-[#333] flex items-center pl-[10px] shrink-0">
      <svg width="20" height="20" viewBox="0 0 20 20" className="block shrink-0"><circle cx="10" cy="10" r="8.500" stroke="#eee" strokeWidth="2" fill="none" /></svg>
      <span className="ml-[6px] text-[14px] text-[#8c8c8c] whitespace-nowrap">在这里输入你要搜索的内容</span>
      <svg width="12" height="18" viewBox="0 0 12 18" className="block ml-auto mr-[15px]"><rect x="3.500" y="1" width="5" height="11" rx="2.500" stroke="#999" fill="none" /><path d="M1 8c0 6 10 6 10 0M6 13v4M3 17h6" stroke="#999" fill="none" /></svg>
    </div>
    <Tb cls="w-[50px] ml-px"><svg width="24" height="24" viewBox="0 0 24 24" className="block"><path d="M11 11C4 12 1 8 2 4s7-4 9 0zM13 11C12 4 16 1 20 2s4 7 0 9zM13 13c7-1 10 3 9 7s-7 4-9 0zM11 13c1 7-3 10-7 9s-4-7 0-9z" fill="#e4e4e4" /></svg></Tb>
    <Tb cls="w-[49px]"><svg width="20" height="22" viewBox="0 0 20 22" className="block"><path d="M17 6C13 0 3 2 2 10s6 11 11 9 5-8 1-10-8 0-7 4 5 3 6 1" stroke="#bbb" strokeWidth="1.600" fill="none" /></svg></Tb>
    <Tb cls="w-[18px]"><div className="w-px h-[18px] bg-[#333]" /></Tb>
    <Tb cls="w-[48px] ml-[7px]"><svg width="22" height="22" viewBox="0 0 22 22" className="block"><path d="M3 12C2 4 9 0 15 2c4 1 6 5 6 10H8c0 4 6 6 12 3v4c-8 4-16 1-17-7zM8 9h8c0-4-7-4-8 0z" fill="#0a78d8" /></svg></Tb>
    <Tb cls="w-[48px]"><svg width="20" height="24" viewBox="0 0 20 24" className="block"><path d="M1 6h18v17H1z" fill="#fff" /><path d="M6 6c0-6 8-6 8 0" stroke="#fff" strokeWidth="1.500" fill="none" /><path d="M6 10h3.500v3.500H6zM10.500 10H14v3.500h-3.500zM6 14.500h3.500V18H6zM10.500 14.500H14V18h-3.500z" fill="#111" /></svg></Tb>
    <Tb cls="w-[42px] ml-[5px] border-b-2 border-[#76b9ed]"><svg width="22" height="24" viewBox="0 0 22 24" className="block"><path d="M0 2h9l2 2h11v20H0z" fill="#f4d27a" /><path d="M0 6h22" stroke="#e8b850" /><path d="M7 15h8v9H7z" fill="#36a0e0" /><path d="M5 16l6-5 6 5z" fill="#36a0e0" /></svg></Tb>
    <Tb cls="w-[43px] ml-[5px] border-b-2 border-[#76b9ed]"><svg width="24" height="24" viewBox="0 0 24 24" className="block"><path d="M20 6C16 1 6 1 3 8s1 14 9 14 10-6 9-10H11l2 4h3c-1 3-8 3-9-3s7-10 13-7z" fill="#1488dc" /></svg></Tb>
    <Tb cls="w-[40px] ml-[9px] border-b-2 border-[#76b9ed]"><svg width="24" height="24" viewBox="0 0 24 24" className="block"><rect width="24" height="24" rx="2" fill="#f0a020" /><path d="M5 6l11-2 3 14-11 2z" fill="#fbf1d8" stroke="#b06a10" strokeWidth=".6" /><path d="M8 9h7M8 12h7M9 15h6" stroke="#a88" /><path d="M16 14L22 1" stroke="#c04020" strokeWidth="2" /></svg></Tb>
    <Tb cls="w-[48px] ml-[5px] bg-[#333b41] border-b-2 border-[#76b9ed]"><svg width="24" height="26" viewBox="0 0 24 26" className="block"><rect width="24" height="26" rx="4" fill="#0a8be0" /><path d="M12 4v18M6 12h12" stroke="#fff" strokeWidth="2" /><circle cx="7" cy="12" r="3" stroke="#fff" strokeWidth="1.500" fill="none" /><circle cx="17" cy="12" r="3" stroke="#fff" strokeWidth="1.500" fill="none" /></svg></Tb>
    <Tb cls="w-[45px] border-b-2 border-[#76b9ed] pl-[5px]"><svg width="24" height="24" viewBox="0 0 24 24" className="block"><circle cx="12" cy="12" r="11" fill="#7fc842" /><circle cx="12" cy="12" r="7" fill="#eaf7dc" /><path d="M6 12h12" stroke="#46a020" strokeWidth="2" /><path d="M12 5l-4 5h8z" fill="#46a020" /></svg></Tb>
    <div className="w-[60px] ml-[140px] shrink-0 flex flex-col items-center justify-center text-[12px] leading-[18px] text-[#eee]">
      <span>63%</span><span className="whitespace-nowrap">CPU使用</span>
    </div>
    <Tb cls="w-[14px] ml-[12px]"><svg width="12" height="7" viewBox="0 0 12 7" className="block"><path d="M1 6.500L6 1l5 5.500" stroke="#eee" fill="none" /></svg></Tb>
    <Tb cls="w-[18px] ml-[8px]"><svg width="16" height="20" viewBox="0 0 16 20" className="block"><rect width="16" height="20" fill="#333" /><path d="M2 10c3-5 9-5 12 0-3 5-9 5-12 0z" fill="#76b900" /><circle cx="8" cy="10" r="2" fill="#333" /></svg></Tb>
    <Tb cls="w-[18px] ml-[6px]"><svg width="16" height="14" viewBox="0 0 16 14" className="block"><path d="M1 3h2M2 1v3M1 4h3v3H1z" stroke="#eee" fill="none" /><rect x="5" y="4" width="10" height="8" stroke="#eee" fill="none" /><rect x="7" y="6" width="6" height="4" fill="#eee" /></svg></Tb>
    <Tb cls="w-[18px] ml-[7px]"><svg width="14" height="14" viewBox="0 0 14 14" className="block"><path d="M1 13C1 6 6 1 13 1M4 13c0-5 4-9 9-9M7 13c0-3 3-6 6-6M10 13c0-1 1-3 3-3" stroke="#bbb" fill="none" /></svg></Tb>
    <Tb cls="w-[14px] ml-[5px]"><svg width="16" height="16" viewBox="0 0 16 16" className="block"><path d="M1 5h2l4-3v12l-4-3H1z" stroke="#eee" fill="none" /><path d="M10 5c1 2 1 4 0 6M12 3c2 3 2 7 0 10" stroke="#bbb" fill="none" /></svg></Tb>
    <Tb cls="w-[14px] ml-[11px] text-[14px]">中</Tb>
    <Tb cls="w-[16px] ml-[14px]"><div className="w-[15px] h-[17px] bg-[#f05a22] rounded-[3px] flex items-center justify-center text-white font-bold text-[14px] leading-none font-['Liberation_Sans',sans-serif] -rotate-6">S</div></Tb>
    <div className="w-[64px] ml-[14px] shrink-0 flex flex-col items-center justify-center text-[12px] leading-[18px] text-[#eee]">
      <span>15:11</span><span>2017/7/20</span>
    </div>
    <Tb cls="w-[20px] ml-[15px] relative">
      <svg width="15" height="14" viewBox="0 0 15 14" className="block"><path d="M0 0h15v10H7l-3 3v-3H0z" fill="#eee" /><path d="M2 3h11M2 5h11M2 7h8" stroke="#333" /></svg>
      <div className="absolute left-[8px] top-[20px] w-[16px] h-[16px] rounded-full bg-[#333] border border-[#888] text-white text-[11px] font-bold flex items-center justify-center leading-none">2</div>
    </Tb>
  </div>
);

const Sogou = () => (
  <div className="absolute left-[1182px] top-[704px] w-[184px] h-[24px] bg-white flex items-center">
    <div className="w-[26px] h-[26px] -mt-[2px] bg-[#f4581c] rounded-[3px] flex items-center justify-center text-white font-bold text-[24px] leading-none font-['Liberation_Sans',sans-serif] -rotate-6 shrink-0">S</div>
    <span className="ml-[7px] text-[14px] font-bold text-[#1c78d0] leading-none">英</span>
    <span className="ml-[9px] text-[#1c78d0] font-bold leading-none w-[12px]">•,</span>
    <svg width="12" height="18" viewBox="0 0 12 18" className="block ml-[8px]"><rect x="3" y="0" width="6" height="11" rx="3" fill="#1c78d0" /><path d="M1 8c0 6 10 6 10 0M6 13v4M3 17h6" stroke="#1c78d0" fill="none" strokeWidth="1.300" /></svg>
    <svg width="16" height="13" viewBox="0 0 16 13" className="block ml-[5px]"><rect width="16" height="13" rx="1.500" fill="#1c78d0" /><path d="M2 3h12M2 6h12M4 9.500h8" stroke="#fff" strokeDasharray="1.500 1" /></svg>
    <svg width="15" height="18" viewBox="0 0 15 18" className="block ml-[6px]"><circle cx="6" cy="5" r="4" fill="#c4d0dc" /><path d="M0 18c0-7 12-7 12 0z" fill="#c4d0dc" /><rect x="6" y="10" width="9" height="8" fill="#fff" /></svg>
    <svg width="16" height="16" viewBox="0 0 16 16" className="block ml-[6px]"><path d="M5 0L0 3l2 4 2-1v10h8V6l2 1 2-4-5-3c-1 2-5 2-6 0z" fill="#1c78d0" /></svg>
    <svg width="16" height="17" viewBox="0 0 16 17" className="block ml-[6px]"><path d="M2 16L9 7c-1-4 2-7 6-6l-3 3 1 2 2 0 1-2c1 3-2 7-6 6l-5 6z" fill="#1c78d0" /></svg>
  </div>
);

export default function App() {
  return (
    <div className="relative w-[1366px] h-[768px] overflow-hidden flex flex-col bg-[#f0f0f0] text-[12px] leading-none text-[#111] font-['Noto_Sans','Noto_Sans_CJK_SC',sans-serif]">
      <div className="h-[23px] shrink-0 bg-white flex items-center pl-[2px] relative">
        <svg width="17" height="17" viewBox="0 0 17 17" className="block shrink-0"><rect width="17" height="17" rx="3" fill="#0a8be0" /><path d="M8.500 3v11M4 8.500h9" stroke="#fff" strokeWidth="1.300" /><circle cx="5" cy="8.500" r="2" stroke="#fff" fill="none" /><circle cx="12" cy="8.500" r="2" stroke="#fff" fill="none" /></svg>
        <span className="ml-[4px] text-[13px] tracking-[-0.16px] text-[#222] whitespace-nowrap font-['Liberation_Sans','Noto_Sans_CJK_SC',sans-serif]">广联达BIM钢筋算量软件 GGJ2013 - [C:\Users\Administrator.PC-20141127NRHM\Desktop\白龙村-2016-08-25-13-27-07(2166版).GGJ12]</span>
        <div className="absolute left-[1182px] -top-[30px] w-[48px] h-[48px] rounded-full bg-[#35b04c] border-2 border-[#bfe0c4] shadow-[0_1px_3px_#888] flex items-end justify-center pb-[3px] text-white text-[13px] leading-none">68</div>
        <svg width="12" height="12" viewBox="0 0 12 12" className="block absolute left-[1244px] top-[5px]"><path d="M1 6h10" stroke="#111" /></svg>
        <svg width="12" height="12" viewBox="0 0 12 12" className="block absolute left-[1289px] top-[5px]"><path d="M1.500 3.500h7v7h-7zM3.500 3.500v-2h7v7h-2" stroke="#111" fill="none" /></svg>
        <svg width="12" height="12" viewBox="0 0 12 12" className="block absolute left-[1335px] top-[5px]"><path d="M1 1l10 10M11 1L1 11" stroke="#111" /></svg>
      </div>
      <div className="h-[29px] shrink-0 flex items-center pl-[7px] text-[#1a1a1a]">
        {([['文件(F)', 'w-[48px]'], ['编辑(E)', 'w-[49px]'], ['楼层(L)', 'w-[48px]'], ['构件(N)', 'w-[52px]'], ['绘图(D)', 'w-[51px]'], ['修改(M)', 'w-[54px]'], ['钢筋量(Q)', 'w-[64px]'], ['视图(V)', 'w-[50px]'], ['工具(T)', 'w-[49px]'], ['云应用(Y)', 'w-[61px]'], ['BIM应用(I)', 'w-[70px]'], ['在线服务(S)', 'w-[73px]'], ['帮助(H)', 'w-[51px]'], ['版本号(B)', 'w-[60px]']] as const).map(([t, w]) => (
          <span key={t} className={`${w} shrink-0 whitespace-nowrap`}>{t}</span>
        ))}
        <Svg w={14} h={18} vb="0 0 14 18"><path d="M1 1h8l4 4v12H1z" fill="#fff" stroke="#2a6cb0" /><circle cx="9.500" cy="13" r="4" fill="#58b030" /><path d="M7 13h5M9.500 10.500v5" stroke="#fff" /></Svg>
        <span className="ml-[6px] whitespace-nowrap">新建变更</span>
        <Drop cls="ml-[4px]" />
        <div className="ml-[5px]"><Svg w={16} h={16}><path d="M8 1c4 0 7 3 7 7s-3 7-7 7-7-3-7-7 3-7 7-7z" fill="#2c9ae8" /><circle cx="5.500" cy="7" r="1.800" fill="#fff" /><circle cx="10.500" cy="7" r="1.800" fill="#fff" /><path d="M5 11c2 1.500 4 1.500 6 0" stroke="#fff" /></Svg></div>
        <span className="ml-[4px] whitespace-nowrap">广小二</span>
        <div className="ml-[7px] w-[188px] h-full bg-[#f8f8f8] flex items-center pl-[29px] text-[#0c6a70] whitespace-nowrap shrink-0">如何快速布置自定义范..</div>
        <div className="ml-[5px]"><Svg w={17} h={18} vb="0 0 17 18"><rect width="17" height="18" rx="2" fill="#4a9ad8" /><circle cx="8.500" cy="7" r="3" fill="#fff" /><path d="M3 15c1-5 10-5 11 0z" fill="#fff" /></Svg></div>
        <span className="ml-[3px] whitespace-nowrap text-[12px]">13907298339</span>
        <Drop cls="ml-[4px]" />
        <span className="ml-[9px] whitespace-nowrap">造价豆:0</span>
        <div className="ml-[9px]"><Svg w={13} h={18} vb="0 0 13 18"><path d="M6.500 0C9 0 10 2 10 5v5l3 3H0l3-3V5c0-3 1-5 3.500-5z" fill="#3a8ae8" /><path d="M4 14c1 4 4 4 5 0z" fill="#2a6cc0" /></Svg></div>
        <More cls="ml-auto mr-[3px] mb-[6px]" />
      </div>
      <div className="h-[31px] shrink-0 flex items-center">
        <Seg cls="h-[28px] w-[152px]">
          <div className="ml-[5px]"><I n="newf" /></div>
          <div className="ml-[5px]"><I n="open" w={17} /></div>
          <Drop cls="ml-[2px] w-[8px]" />
          <div className="ml-[6px]"><I n="save" w={15} /></div>
          <div className="ml-[4px] h-[25px] w-px bg-[#b8b8b8]" />
          <div className="ml-[7px]"><I n="undo" w={15} /></div>
          <Drop cls="ml-[5px]" />
          <More cls="ml-[16px] mb-[8px]" />
        </Seg>
        <Seg cls="h-[28px] w-[548px] ml-px">
          <Tool i="def" t="定义" />
          <Tool i="sigma" t="汇总计算" w={14} cls="ml-[2px]" />
          <Tool i="cloud" t="云检查" cls="-ml-[2px]" />
          <Tool i="flat" t="平齐板顶" g />
          <Tool i="binoc" t="查找图元" w={17} cls="-ml-[2px]" />
          <Tool i="view" t="查看钢筋量" w={17} cls="-ml-[3px]" />
          <Tool i="batch" t="批量选择" />
          <More cls="ml-auto mr-[2px] mb-[8px]" />
        </Seg>
        <Seg cls="h-[28px] flex-1 ml-[4px]">
          <div className="w-[63px] h-[27px] ml-px bg-white flex items-center pl-[3px] gap-[3px] shrink-0">
            <I n="cube" w={15} /><span>三维</span>
            <div className="ml-auto w-[11px] h-full flex items-center justify-center bg-[#f4f4f4]"><Arr /></div>
          </div>
          <Tool i="top" t="俯视" /><Drop />
          <Tool i="orbit" t="动态观察" cls="ml-[2px]" />
          <Tool i="local" t="局部三维" g cls="-ml-[2px]" /><Sep />
          <Tool i="full" t="全屏" />
          <Tool i="zoom" t="缩放" /><Drop />
          <Tool i="pan" t="平移" cls="ml-px" /><Drop />
          <Tool i="rot" t="屏幕旋转" /><Drop n />
          <Sep cls="ml-[3px]" />
          <Tool i="floor" t="选择楼层" w={14} cls="ml-px" />
          <More cls="ml-auto mr-[3px] mb-[8px]" />
        </Seg>
      </div>
      <div className="h-px shrink-0" />
      <div className="h-[623px] shrink-0 flex min-h-0">
        <Nav />
        <Right />
      </div>
      <div className="h-[21px] shrink-0 flex items-center gap-[2px]">
        <Cell t="X=52480 Y=30516" cls="w-[148px] bg-[#f4f4f4]" />
        <Cell t="层高:3.55m" cls="w-[78px] bg-[#f4f4f4]" />
        <Cell t="底标高:-3.58m" cls="w-[98px] bg-[#f4f4f4]" />
        <Cell t="1(1)" cls="w-[48px] bg-[#f4f4f4]" />
        <Cell t="按鼠标左键指定第一个角点，或拾取构件图元" cls="flex-1 bg-[#f9f9f9]" />
      </div>
      <Taskbar />
      <Sogou />
    </div>
  );
}
